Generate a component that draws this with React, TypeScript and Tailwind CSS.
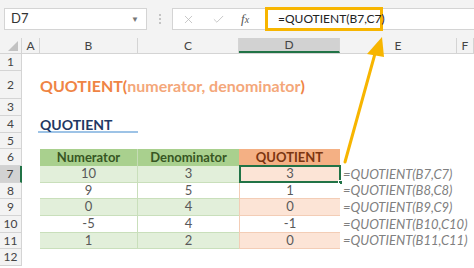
import { X, Check } from "lucide-react"

const cols = [
  { key: "A", w: "w-[18px]" },
  { key: "B", w: "w-[98px]" },
  { key: "C", w: "w-[101px]" },
  { key: "D", w: "w-[101px]" },
  { key: "E", w: "w-[117px]" },
  { key: "F", w: "w-[17px]" },
]

const heights = ["h-[17px]", "h-[28px]", "h-[17px]", "h-[17px]", "h-[16px]", "h-[17px]", "h-[17px]", "h-[16px]", "h-[17px]", "h-[17px]", "h-[16px]", "h-[17px]"]

const data = [
  { n: "10", d: "3", q: "3" },
  { n: "9", d: "5", q: "1" },
  { n: "0", d: "4", q: "0" },
  { n: "-5", d: "4", q: "-1" },
  { n: "1", d: "2", q: "0" },
]

const font = "font-['Lato','Open_Sans',sans-serif]"

function Cell({ className = "", children }: { className?: string; children?: React.ReactNode }) {
  return <div className={`flex shrink-0 items-center overflow-visible whitespace-nowrap ${className}`}>{children}</div>
}

export default function App() {
  return (
    <div className={`relative h-[268px] w-[474px] overflow-hidden bg-white ${font}`}>
      {/* formula bar */}
      <div className="flex h-[38px] items-center bg-[#f3f3f3] pl-[4px]">
        <div className="flex h-[22px] w-[143px] items-center justify-between border border-[#d4d4d4] bg-white pl-[6px] pr-[7px] text-[13px] text-[#333]">
          <span>D7</span>
          <span className="text-[8px] text-[#777]">▼</span>
        </div>
        <div className="flex w-[25px] flex-col items-center gap-[2px]">
          <span className="h-[2px] w-[2px] rounded-full bg-[#b5b5b5]" />
          <span className="h-[2px] w-[2px] rounded-full bg-[#b5b5b5]" />
          <span className="h-[2px] w-[2px] rounded-full bg-[#b5b5b5]" />
        </div>
        <div className="flex h-[22px] flex-1 items-center border border-r-0 border-[#d4d4d4] bg-white">
          <div className="flex w-[92px] items-center pl-[9px] text-[#bdbdbd]">
            <X className="h-[13px] w-[13px]" strokeWidth={1.5} />
            <Check className="ml-[17px] h-[13px] w-[13px]" strokeWidth={1.5} />
            <span className="ml-[16px] font-['Liberation_Serif',serif] text-[13px] italic text-[#555]">
              f<span className="text-[10px]">x</span>
            </span>
          </div>
          <div className="flex h-[24px] w-[118px] items-center border-[3px] border-[#f7b500] pl-[10px] text-[12px] text-[#222]">
            =QUOTIENT(B7,C7)
          </div>
        </div>
      </div>

      {/* sheet */}
      <div className="flex flex-col">
        {/* column headers */}
        <div className="flex h-[16px] border-b border-[#d4d4d4] bg-[#f3f3f3] text-[12px] text-[#444]">
          <div className="relative w-[22px] shrink-0 border-r border-[#d4d4d4]">
            <div className="absolute bottom-[2px] right-[3px] h-0 w-0 border-b-[10px] border-l-[10px] border-b-[#c2c2c2] border-l-transparent" />
          </div>
          {cols.map((c) => (
            <div
              key={c.key}
              className={`flex shrink-0 items-center justify-center border-r border-[#d4d4d4] ${c.w} ${
                c.key === "D" ? "border-b-2 border-b-[#217346] bg-[#d2d2d2]" : ""
              }`}
            >
              {c.key}
            </div>
          ))}
        </div>

        {heights.map((h, i) => {
          const row = i + 1
          const item = row >= 7 && row <= 11 ? data[row - 7] : null
          const odd = row % 2 === 1
          return (
            <div key={row} className={`flex ${h}`}>
              <div
                className={`flex w-[22px] shrink-0 items-center justify-center border-b border-r border-[#d4d4d4] text-[12px] text-[#444] ${
                  row === 7 ? "border-r-2 border-r-[#217346] bg-[#d2d2d2]" : "bg-[#f3f3f3]"
                }`}
              >
                {row}
              </div>
              <div className="w-[18px] shrink-0" />

              {row === 2 && (
                <Cell className="w-[300px] pt-[1px] text-[16px] font-bold text-[#ef8444]">
                  QUOTIENT(<span className="text-[#f4a77a]">numerator, denominator</span>)
                </Cell>
              )}

              {row === 4 && (
                <Cell className="ml-[-2px] w-[100px] border-b-2 border-[#9dc3e6] pl-[2px] pt-[1px] text-[14px] font-bold text-[#1f3864]">
                  QUOTIENT
                </Cell>
              )}

              {row === 6 && (
                <>
                  <Cell className="w-[98px] justify-center border-r border-[#c5dcb5] bg-[#a9d08e] text-[13px] font-bold text-[#375623]">
                    Numerator
                  </Cell>
                  <Cell className="w-[101px] justify-center bg-[#a9d08e] text-[13px] font-bold text-[#375623]">
                    Denominator
                  </Cell>
                  <Cell className="w-[101px] justify-center bg-[#f4b084] text-[13px] font-bold text-[#7b3510]">
                    QUOTIENT
                  </Cell>
                </>
              )}

              {item && (
                <>
                  <Cell
                    className={`w-[98px] justify-center border-b border-r border-[#c9dfbb] text-[13px] text-[#595959] ${
                      odd ? "bg-[#e2efda]" : "bg-white"
                    }`}
                  >
                    {item.n}
                  </Cell>
                  <Cell
                    className={`w-[101px] justify-center border-b border-[#c9dfbb] text-[13px] text-[#595959] ${
                      odd ? "bg-[#e2efda]" : "bg-white"
                    }`}
                  >
                    {item.d}
                  </Cell>
                  <Cell
                    className={`relative w-[101px] justify-center border-b border-l border-[#f3cdb6] text-[13px] text-[#595959] ${
                      odd ? "bg-[#fce4d6]" : "bg-white"
                    }`}
                  >
                    {item.q}
                    {row === 7 && (
                      <>
                        <div className="absolute inset-[-1px] border-2 border-[#217346]" />
                        <div className="absolute bottom-[-3px] right-[-3px] h-[5px] w-[5px] border border-white bg-[#217346]" />
                      </>
                    )}
                  </Cell>
                  <Cell className="w-[117px] pl-[3px] text-[13px] italic text-[#808080]">
                    =QUOTIENT(B{row},C{row})
                  </Cell>
                </>
              )}
            </div>
          )
        })}
      </div>

      {/* callout arrow from the formula column up to the formula bar */}
      <svg className="pointer-events-none absolute left-0 top-0" width="474" height="268">
        <line x1="345" y1="162" x2="376" y2="50" stroke="#f7b500" strokeWidth="3" strokeLinecap="round" />
        <polygon points="382,37 367,54 384,57" fill="#f7b500" />
      </svg>
    </div>
  )
}
